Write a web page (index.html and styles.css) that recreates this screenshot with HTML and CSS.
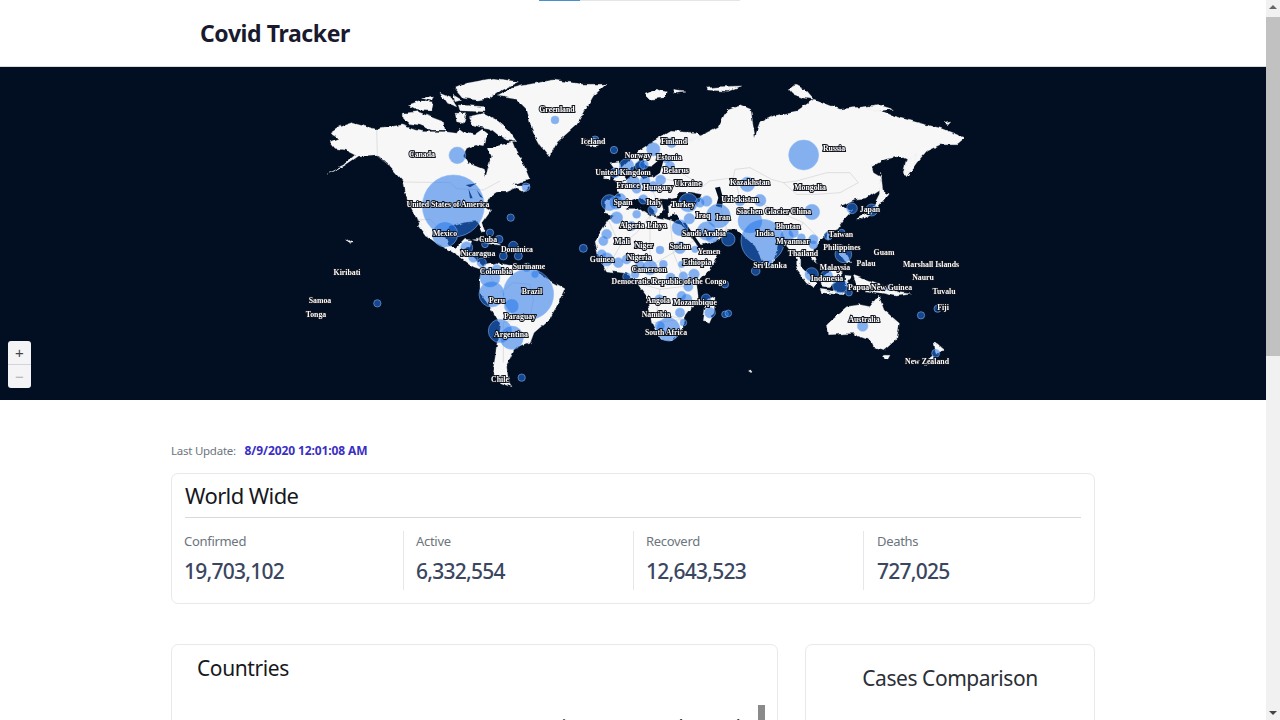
FILE: index.html
```html
<!DOCTYPE html>
<html lang="en">
  <head>
    <meta charset="UTF-8">
    <meta name="viewport" content="width=device-width, initial-scale=1.0">
    <title>Covid Tracker</title>
    <link rel="stylesheet" href="styles.css">
  </head>
  <body>
    <div class="page">
      <div class="main">
        <div class="top-progress"><span class="top-progress-done"></span></div>
        <header class="header">
          <h1>Covid Tracker</h1>
        </header>

        <div class="map">
          <svg class="map-svg" viewBox="0 67 1266 333" xmlns="http://www.w3.org/2000/svg">
            <defs>
              <!-- roughens the coastlines a bit -->
              <filter id="coast" x="-5%" y="-5%" width="110%" height="110%" color-interpolation-filters="sRGB">
                <feTurbulence type="fractalNoise" baseFrequency=".04" numOctaves="3" seed="4"/>
                <feDisplacementMap in="SourceGraphic" scale="14" xChannelSelector="R" yChannelSelector="G"/>
              </filter>
            </defs>

            <!-- americas, drawn in crop coords -->
            <g transform="translate(300 66) scale(.33333)">
              <g class="land" filter="url(#coast)">
                <path d="M80,322 L130,297 L165,267 L135,252 L105,247 L90,227 L115,217 L90,202 L120,182 L155,170 L190,180 L230,190 L275,182 L305,177 L345,192 L370,197 L405,197 L435,197 L470,202 L480,187 L500,202 L525,207 L550,190 L565,202 L555,217 L550,242 L525,237 L500,247 L490,267 L505,292 L550,310 L557,332 L565,302 L575,272 L565,247 L605,237 L640,227 L650,253 L662,274 L690,342 L662,347 L640,357 L692,357 L675,377 L650,365 L620,378 L590,378 L568,392 L552,420 L572,432 L545,470 L555,497 L546,497 L530,466 L500,468 L452,482 L432,505 L445,538 L470,545 L495,520 L515,522 L510,540 L490,548 L520,572 L548,600 L590,590 L640,600 L700,612 L748,642 L795,668 L780,702 L748,760 L702,800 L690,832 L642,850 L620,900 L625,945 L636,962 L602,950 L578,920 L590,842 L600,772 L570,722 L540,682 L540,640 L548,612 L520,602 L480,572 L440,548 L410,532 L380,510 L352,462 L322,402 L310,345 L272,302 L232,266 L176,270 L132,300 Z"/>
                <path d="M360,470 L385,510 L378,512 L355,480 Z"/>
                <path d="M310,142 L350,137 L390,152 L430,167 L435,192 L395,192 L360,177 L325,172 L310,157 Z"/>
                <path d="M325,117 L360,104 L400,112 L395,132 L350,130 Z"/>
                <path d="M365,97 L400,90 L395,104 Z"/>
                <path d="M420,82 L455,97 L470,122 L440,112 Z"/>
                <path d="M460,87 L485,102 L465,107 Z"/>
                <path d="M465,67 L500,52 L580,37 L655,47 L605,72 L570,97 L530,102 L490,97 Z"/>
                <path d="M475,117 L555,122 L555,137 L480,134 Z"/>
                <path d="M465,142 L500,140 L490,172 L470,167 Z"/>
                <path d="M505,152 L550,142 L590,162 L625,192 L650,227 L620,222 L595,207 L570,187 L540,182 L520,177 Z"/>
                <path d="M660,60 L760,42 L850,55 L918,55 L880,90 L852,140 L830,176 L772,228 L748,272 L722,240 L700,200 L680,130 L650,100 L592,90 L630,68 Z"/>
                <path d="M845,225 L880,215 L915,228 L890,240 L855,238 Z"/>
                <path d="M520,522 L560,515 L600,538 L560,532 Z"/>
                <path d="M612,550 L645,552 L642,560 L615,558 Z"/>
                <path d="M140,518 L158,530 L150,532 Z"/>
              </g>
              <g class="water">
                <path d="M497,357 L530,352 L510,364 Z"/>
                <path d="M505,367 L518,397 L510,397 Z"/>
                <path d="M530,372 L550,397 L540,392 Z"/>
              </g>
              <g class="border">
                <path d="M230,190 L232,266 M310,348 L450,350 L470,368 L550,372 L600,345 M352,462 L390,460 L430,500 M600,680 L640,650 L690,655 L700,700 L690,755 L650,760 L610,770 L610,890 M548,600 L590,660 M270,300 L232,270"/>
              </g>
            </g>

            <!-- old world, same scale -->
            <g transform="translate(640 66) scale(.33333)">
              <g class="land" filter="url(#coast)">
                <path d="M-60,310 L-42,290 L0,252 L40,226 L90,196 L170,200 L182,216 L140,226 L200,200 L235,182 L262,130 L300,116 L332,130 L345,212 L360,170 L400,150 L470,135 L522,100 L600,130 L690,120 L760,150 L852,175 L900,186 L975,215 L950,236 L900,236 L860,255 L830,290 L800,332 L790,320 L800,280 L780,270 L730,282 L695,302 L700,320 L720,332 L720,370 L680,396 L640,400 L600,420 L632,436 L640,430 L610,462 L590,490 L560,500 L540,522 L520,552 L532,592 L510,572 L482,560 L482,600 L502,642 L470,612 L470,580 L440,540 L415,530 L400,590 L375,600 L345,540 L310,510 L290,490 L260,490 L240,522 L172,540 L130,472 L100,442 L88,452 L85,420 L115,408 L175,408 L185,385 L150,378 L120,378 L108,395 L88,400 L62,398 L70,432 L50,452 L30,420 L0,395 L-25,405 L-42,432 L-72,450 L-105,440 L-102,402 L-60,392 L-68,362 L-40,338 L-5,322 L10,340 L45,330 L50,302 L20,300 L5,270 L-30,315 Z"/>
                <path d="M-90,290 L-65,285 L-42,335 L-58,350 L-80,345 L-68,320 Z"/>
                <path d="M-110,315 L-88,315 L-90,338 L-112,338 Z"/>
                <path d="M-135,525 L-95,462 L-50,428 L0,428 L30,450 L90,462 L130,480 L160,525 L190,565 L240,555 L210,610 L170,650 L175,700 L140,745 L125,795 L95,825 L60,820 L35,770 L20,690 L-10,650 L-40,622 L-100,615 L-125,570 Z"/>
                <path d="M205,700 L225,690 L222,740 L208,772 L190,765 L195,730 Z"/>
                <path d="M562,772 L620,722 L660,716 L690,722 L716,688 L732,732 L778,772 L770,822 L736,852 L700,842 L690,820 L640,802 L566,806 Z"/>
                <path d="M730,868 L750,868 L742,882 L734,880 Z"/>
                <path d="M882,826 L910,848 L892,868 L885,850 Z"/>
                <path d="M880,868 L885,880 L858,902 L848,892 Z"/>
                <path d="M465,602 L480,600 L530,650 L520,665 L498,650 Z"/>
                <path d="M540,640 L580,605 L610,620 L600,645 L565,665 L545,660 Z"/>
                <path d="M540,670 L612,680 L608,686 L545,680 Z"/>
                <path d="M615,628 L635,630 L622,645 L632,662 L615,660 Z"/>
                <path d="M640,625 L680,640 L735,660 L780,680 L812,684 L770,690 L720,680 L680,675 L650,660 Z"/>
                <path d="M595,535 L615,540 L620,565 L635,590 L615,585 L600,565 Z"/>
                <path d="M650,462 L695,430 L718,385 L722,318 L730,385 L750,378 L700,440 L660,462 Z"/>
                <path d="M790,330 L800,290 L830,262 L820,305 Z"/>
                <path d="M385,588 L395,592 L392,604 L384,600 Z"/>
                <path d="M562,500 L572,505 L566,522 L560,518 Z"/>
                <path d="M15,85 L50,70 L80,78 L70,95 L30,100 Z"/>
                <path d="M100,70 L135,75 L105,80 Z"/>
                <path d="M198,66 L240,62 L305,60 L265,76 L200,72 Z"/>
                <path d="M445,68 L470,58 L495,72 L520,100 L490,96 L460,85 Z"/>
                <path d="M682,124 L720,118 L760,130 L710,135 Z"/>
                <path d="M912,172 L932,168 L925,176 Z"/>
                <path d="M326,916 L336,915 L334,920 Z"/>
              </g>
              <g class="water">
                <path d="M225,365 L240,362 L250,400 L245,425 L228,420 L235,395 Z"/>
                <path d="M128,470 L136,470 L195,555 L185,558 Z"/>
                <path d="M200,490 L240,505 L235,515 L210,505 Z"/>
                <path d="M35,300 L65,275 L120,268 L70,285 L60,320 L40,335 Z"/>
              </g>
              <g class="border">
                <path d="M208,345 L280,335 L285,310 L330,305 L395,340 L430,350 L470,345 L560,320 L630,320 L655,350 L600,380 L530,385 L470,385 L430,350 M285,335 L300,400 L360,410 L400,430 L490,470 M172,376 L208,345 M240,420 L260,490 M310,510 L330,470 M470,500 L490,470 L520,500 L540,520 M-95,462 L-60,540 L-10,500 L30,450 M-60,540 L-100,610 M30,600 L30,450 M90,462 L100,560 L160,525 M30,600 L100,560 L140,660 L60,670 L-10,650 M60,670 L50,740 L130,760 M40,770 L130,760 M20,340 L60,420 M45,330 L100,345 M90,300 L172,350"/>
              </g>
              <g class="bubbles">
                <circle cx="-40" cy="300" r="22"/><circle cx="-75" cy="320" r="15"/><circle cx="0" cy="300" r="15"/><circle cx="12" cy="296" r="13"/><circle cx="40" cy="250" r="20"/><circle cx="95" cy="230" r="15"/><circle cx="90" cy="300" r="14"/><circle cx="80" cy="280" r="12"/><circle cx="-20" cy="350" r="20"/><circle cx="15" cy="345" r="15"/><circle cx="40" cy="362" r="16"/><circle cx="62" cy="342" r="15"/><circle cx="-10" cy="368" r="14"/><circle cx="-92" cy="410" r="24"/><circle cx="-72" cy="410" r="20"/><circle cx="-60" cy="400" r="18"/><circle cx="38" cy="432" r="14"/><circle cx="10" cy="400" r="14"/><circle cx="145" cy="410" r="28"/><circle cx="200" cy="405" r="16"/><circle cx="180" cy="410" r="14"/><circle cx="148" cy="458" r="16"/><circle cx="120" cy="485" r="24"/><circle cx="200" cy="495" r="28"/><circle cx="235" cy="450" r="36"/><circle cx="215" cy="510" r="20"/><circle cx="265" cy="520" r="20"/><circle cx="330" cy="465" r="36"/><circle cx="300" cy="405" r="15"/><circle cx="360" cy="403" r="18"/><circle cx="322" cy="355" r="22"/>
                <circle cx="368" cy="525" r="65"/><circle cx="491" cy="267" r="45"/><circle cx="516" cy="438" r="23"/><circle cx="636" cy="427" r="16"/><circle cx="695" cy="432" r="18"/><circle cx="565" cy="510" r="12"/><circle cx="610" cy="565" r="25"/><circle cx="515" cy="625" r="20"/><circle cx="600" cy="660" r="22"/><circle cx="627" cy="680" r="10"/><circle cx="560" cy="630" r="18"/><circle cx="520" cy="520" r="14"/><circle cx="484" cy="515" r="12"/><circle cx="520" cy="536" r="13"/><circle cx="440" cy="510" r="20"/><circle cx="460" cy="500" r="15"/>
                <circle cx="60" cy="552" r="12"/><circle cx="120" cy="545" r="18"/><circle cx="165" cy="550" r="10"/><circle cx="125" cy="595" r="10"/><circle cx="70" cy="595" r="12"/><circle cx="162" cy="625" r="16"/><circle cx="130" cy="630" r="13"/><circle cx="92" cy="635" r="14"/><circle cx="145" cy="662" r="14"/><circle cx="30" cy="605" r="22"/><circle cx="0" cy="600" r="15"/><circle cx="-40" cy="580" r="14"/><circle cx="-65" cy="590" r="15"/><circle cx="-100" cy="580" r="20"/><circle cx="-115" cy="565" r="14"/><circle cx="-110" cy="525" r="14"/><circle cx="-100" cy="505" r="15"/><circle cx="-70" cy="455" r="18"/><circle cx="-25" cy="480" r="14"/><circle cx="-10" cy="445" r="12"/><circle cx="-40" cy="632" r="12"/><circle cx="-15" cy="625" r="12"/><circle cx="58" cy="700" r="14"/><circle cx="140" cy="700" r="16"/><circle cx="120" cy="740" r="14"/><circle cx="125" cy="690" r="14"/><circle cx="198" cy="698" r="14"/><circle cx="210" cy="740" r="16"/><circle cx="255" cy="655" r="11"/><circle cx="255" cy="745" r="10"/><circle cx="265" cy="742" r="10"/><circle cx="85" cy="790" r="35"/><circle cx="60" cy="780" r="15"/><circle cx="130" cy="770" r="10"/><circle cx="843" cy="748" r="11"/><circle cx="893" cy="728" r="11"/><circle cx="887" cy="862" r="12"/><circle cx="668" cy="780" r="16"/><circle cx="347" cy="615" r="13"/><circle cx="390" cy="590" r="8"/><circle cx="745" cy="665" r="8"/><circle cx="605" cy="500" r="10"/>
              </g>
            </g>

            <g transform="translate(300 66) scale(.33333)" class="bubbles">
              <circle cx="460" cy="420" r="93"/><circle cx="435" cy="505" r="38"/><circle cx="472" cy="268" r="25"/><circle cx="765" cy="162" r="12"/><circle cx="685" cy="685" r="76"/><circle cx="575" cy="685" r="38"/><circle cx="600" cy="795" r="35"/><circle cx="635" cy="815" r="35"/><circle cx="570" cy="635" r="30"/><circle cx="635" cy="720" r="22"/><circle cx="570" cy="500" r="11"/><circle cx="597" cy="520" r="12"/><circle cx="555" cy="535" r="10"/><circle cx="565" cy="565" r="9"/><circle cx="640" cy="540" r="14"/><circle cx="655" cy="570" r="12"/><circle cx="610" cy="570" r="12"/><circle cx="500" cy="545" r="18"/><circle cx="520" cy="575" r="14"/><circle cx="545" cy="590" r="14"/><circle cx="590" cy="610" r="14"/><circle cx="680" cy="605" r="14"/><circle cx="705" cy="625" r="12"/><circle cx="632" cy="455" r="11"/><circle cx="850" cy="547" r="12"/><circle cx="232" cy="712" r="11"/><circle cx="665" cy="935" r="11"/><circle cx="678" cy="363" r="12"/><circle cx="942" cy="252" r="11"/><circle cx="885" cy="222" r="12"/>
            </g>

            <g class="labels">
              <text x="557" y="112">Greenland</text><text x="593" y="144">Iceland</text><text x="422" y="157">Canada</text><text x="448" y="207">United States of America</text><text x="445" y="236">Mexico</text><text x="488" y="242">Cuba</text><text x="517" y="252">Dominica</text><text x="478" y="256">Nicaragua</text><text x="529" y="269">Suriname</text><text x="496" y="274">Colombia</text><text x="497" y="303">Peru</text><text x="532" y="294">Brazil</text><text x="520" y="319">Paraguay</text><text x="511" y="337">Argentina</text><text x="500" y="382">Chile</text><text x="347" y="275">Kiribati</text><text x="320" y="303">Samoa</text><text x="316" y="317">Tonga</text>
              <text x="638" y="158">Norway</text><text x="674" y="144">Finland</text><text x="669" y="160">Estonia</text><text x="623" y="175">United Kingdom</text><text x="676" y="173">Belarus</text><text x="628" y="188">France</text><text x="658" y="190">Hungary</text><text x="688" y="186">Ukraine</text><text x="750" y="185">Kazakhstan</text><text x="834" y="151">Russia</text><text x="810" y="190">Mongolia</text><text x="623" y="205">Spain</text><text x="654" y="205">Italy</text><text x="683" y="207">Turkey</text><text x="740" y="202">Uzbekistan</text><text x="703" y="218">Iraq</text><text x="723" y="220">Iran</text><text x="763" y="214">Siachen Glacier</text><text x="801" y="214">China</text><text x="870" y="212">Japan</text>
              <text x="632" y="228">Algeria</text><text x="657" y="228">Libya</text><text x="704" y="236">Saudi Arabia</text><text x="765" y="236">India</text><text x="788" y="229">Bhutan</text><text x="841" y="237">Taiwan</text><text x="622" y="244">Mali</text><text x="644" y="248">Niger</text><text x="680" y="249">Sudan</text><text x="793" y="244">Myanmar</text><text x="842" y="250">Philippines</text><text x="884" y="255">Guam</text><text x="602" y="262">Guinea</text><text x="639" y="260">Nigeria</text><text x="709" y="254">Yemen</text><text x="803" y="256">Thailand</text><text x="866" y="266">Palau</text><text x="931" y="267">Marshall Islands</text><text x="697" y="265">Ethiopia</text><text x="770" y="268">Sri Lanka</text><text x="835" y="270">Malaysia</text><text x="923" y="280">Nauru</text><text x="649" y="272">Cameroon</text><text x="827" y="281">Indonesia</text><text x="880" y="290">Papua New Guinea</text><text x="669" y="284">Democratic Republic of the Congo</text><text x="944" y="294">Tuvalu</text><text x="658" y="303">Angola</text><text x="695" y="305">Mozambique</text><text x="943" y="310">Fiji</text><text x="656" y="317">Namibia</text><text x="864" y="322">Australia</text><text x="666" y="335">South Africa</text><text x="927" y="364">New Zealand</text>
            </g>
          </svg>

          <div class="zoom-control">
            <button type="button" class="zoom-btn zoom-in">+</button>
            <button type="button" class="zoom-btn zoom-out">&minus;</button>
          </div>
        </div>

        <div class="content">
          <p class="last-update">Last Update: <span class="last-update-value">8/9/2020 12:01:08 AM</span></p>

          <section class="card world-card">
            <h2 class="world-title">World Wide</h2>
            <div class="stats">
              <div class="stat">
                <div class="stat-label">Confirmed</div>
                <div class="stat-value">19,703,102</div>
              </div>
              <div class="stat">
                <div class="stat-label">Active</div>
                <div class="stat-value">6,332,554</div>
              </div>
              <div class="stat">
                <div class="stat-label">Recoverd</div>
                <div class="stat-value">12,643,523</div>
              </div>
              <div class="stat">
                <div class="stat-label">Deaths</div>
                <div class="stat-value">727,025</div>
              </div>
            </div>
          </section>

          <div class="bottom-row">
            <section class="card countries-card">
              <h2 class="countries-title">Countries</h2>
              <div class="table-head">
                <span>Country</span>
                <span>Cases</span>
                <span>Active</span>
                <span>Recoverd</span>
                <span>Deaths</span>
              </div>
              <div class="table-thumb"></div>
            </section>
            <section class="card compare-card">
              <h2 class="compare-title">Cases Comparison</h2>
            </section>
          </div>
        </div>
      </div>

      <div class="scrollbar">
        <div class="scroll-up"></div>
        <div class="scroll-thumb"></div>
        <div class="scroll-track"></div>
        <div class="scroll-down"></div>
      </div>
    </div>
  </body>
</html>
```

FILE: styles.css
```css
html,
body {
  height: 100%;
  margin: 0;
  overflow: hidden;
  background-color: #fff;
  font-family: "Noto Sans", "Open Sans", Arial, sans-serif;
}

.page {
  display: flex;
  height: 720px;
}

.main {
  position: relative;
  width: 1266px;
  overflow: hidden;
}

.top-progress {
  position: absolute;
  top: 0;
  left: 539px;
  width: 201px;
  height: 1px;
  background-color: #e3e5e8;
}

.top-progress-done {
  display: block;
  width: 41px;
  height: 1px;
  background-color: #4a90d0;
}

.header {
  height: 66px;
  padding-left: 200px;
  display: flex;
  align-items: center;
  border-bottom: 1px solid #d9dbde;
}

.header h1 {
  margin: 0;
  font-size: 23px;
  font-weight: 700;
  letter-spacing: -0.4px;
  color: #1a1a2e;
}

.map {
  position: relative;
  height: 333px;
  background-color: #020f22;
}

.map-svg {
  display: block;
  width: 1266px;
  height: 333px;
}

.land path {
  fill: #f7f7f7;
  stroke: #e4e4e4;
  stroke-width: 1;
  stroke-linejoin: round;
}

.water path {
  fill: #020f22;
}

.border path {
  fill: none;
  stroke: #c9c9c9;
  stroke-width: 1.6;
}

.bubbles circle {
  fill: rgba(38, 118, 235, 0.55);
  stroke: rgba(140, 186, 245, 0.9);
  stroke-width: 1.8;
}

/* opacity keeps the small text grey-antialiased, no colour fringe */
.labels {
  opacity: 0.99;
}

.labels text {
  font-family: "Liberation Serif", serif;
  font-size: 7.8px;
  font-weight: 700;
  text-anchor: middle;
  fill: #fff;
  stroke: #10131c;
  stroke-width: 2px;
  paint-order: stroke;
}

.zoom-control {
  position: absolute;
  left: 8px;
  top: 274px;
  width: 23px;
  display: flex;
  flex-direction: column;
  border-radius: 3px;
  overflow: hidden;
  background-color: #f4f4f6;
}

.zoom-btn {
  height: 23.5px;
  padding: 0;
  border: 0;
  background: none;
  font-family: "Liberation Sans", Arial, sans-serif;
  font-size: 15px;
  line-height: 1;
  color: #444;
}

.zoom-in {
  border-bottom: 1px solid #d4d4d6;
}

.zoom-out {
  color: #b0b0b0;
}

.content {
  width: 924px;
  margin: 0 auto;
}

.last-update {
  margin: 42px 0 14px;
  font-size: 11.5px;
  line-height: 17px;
  letter-spacing: -0.25px;
  color: #6c757d;
}

.last-update-value {
  margin-left: 6px;
  font-size: 12px;
  font-weight: 700;
  letter-spacing: -0.1px;
  color: #3a2fc4;
}

.card {
  box-sizing: border-box;
  border: 1px solid #e8e9ec;
  border-radius: 7px;
  background-color: #fff;
}

.world-card {
  height: 131px;
  padding: 0 13px;
}

.world-title {
  margin: 0;
  height: 43px;
  line-height: 43px;
  font-size: 22px;
  font-weight: 400;
  letter-spacing: -0.6px;
  color: #16181d;
  border-bottom: 1px solid #d8d9dc;
}

.stats {
  display: grid;
  grid-template-columns: 218px 230px 230px 1fr;
  margin-top: 13px;
}

.stat {
  height: 59px;
  padding-left: 12px;
  border-left: 1px solid #e6e7ea;
}

.stat:first-child {
  padding-left: 0;
  border-left: 0;
  margin-left: -1px;
}

.stat:last-child {
  padding-left: 13px;
}

.stat-label {
  font-size: 13px;
  line-height: 20px;
  letter-spacing: -0.3px;
  color: #6c757d;
}

.stat-value {
  margin-top: 5px;
  font-size: 21px;
  line-height: 30px;
  font-weight: 500;
  letter-spacing: -0.75px;
  color: #3a4660;
}

.bottom-row {
  display: flex;
  gap: 27px;
  margin-top: 40px;
}

.countries-card {
  position: relative;
  width: 607px;
  height: 300px;
  padding: 0 25px;
}

.countries-title {
  margin: 8px 0 0;
  font-size: 21px;
  line-height: 30px;
  font-weight: 400;
  letter-spacing: -0.4px;
  color: #16181d;
}

.table-head {
  display: grid;
  grid-template-columns: 262px 81px 80px 84px 1fr;
  margin-top: 32px;
  font-size: 14px;
  line-height: 20px;
  font-weight: 600;
  color: #333;
}

.table-thumb {
  position: absolute;
  top: 60px;
  left: 586px;
  width: 7px;
  height: 60px;
  background-color: #8a8a8a;
}

.compare-card {
  width: 290px;
  height: 300px;
}

.compare-title {
  margin: 18px 0 0;
  text-align: center;
  font-size: 21px;
  line-height: 30px;
  font-weight: 400;
  letter-spacing: -0.45px;
  color: #2b2f36;
}

.scrollbar {
  width: 14px;
  height: 720px;
  display: flex;
  flex-direction: column;
  background-color: #f1f1f1;
}

.scroll-up,
.scroll-down {
  height: 14px;
  position: relative;
}

.scroll-up::after,
.scroll-down::after {
  content: "";
  position: absolute;
  left: 3px;
  border-left: 4px solid transparent;
  border-right: 4px solid transparent;
}

.scroll-up::after {
  top: 5px;
  border-bottom: 4px solid #666;
}

.scroll-down::after {
  top: 5px;
  border-top: 4px solid #444;
}

.scroll-thumb {
  height: 339px;
  margin-top: 3px;
  background-color: #c1c1c1;
}

.scroll-track {
  flex: 1;
}
```
